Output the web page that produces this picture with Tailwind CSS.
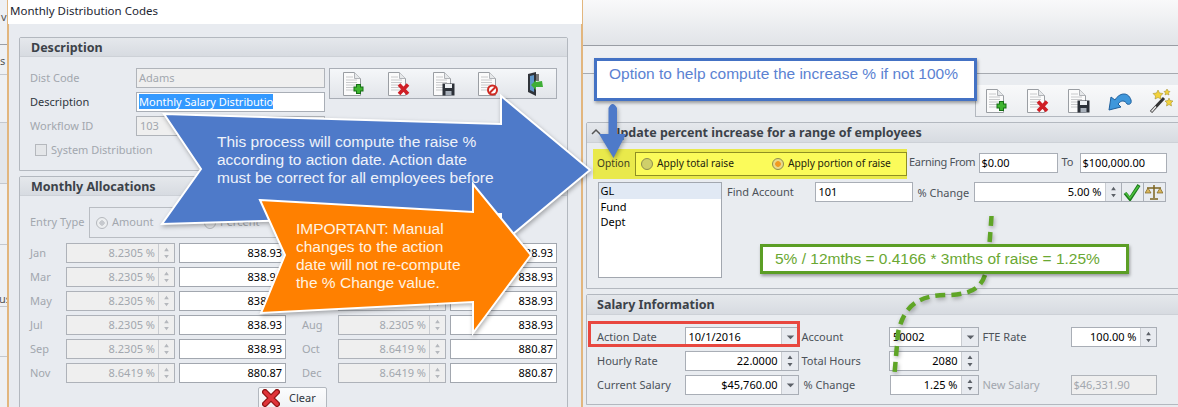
<!DOCTYPE html>
<html lang="en">
<head>
    <meta charset="UTF-8">
    <title>Monthly Distribution Codes</title>
    <script src="https://cdn.jsdelivr.net/npm/@tailwindcss/browser@4"></script>
</head>
<body class="bg-[#e8ebf0]">
<svg class="hidden">
    <symbol id="doc" viewBox="0 0 24 24">
        <path d="M1.500 .5H12.500L18.500 6.500V23.500H1.500Z" fill="#fbfbfb" stroke="#9a9ea3"/>
        <path d="M12.500 .5V6.500H18.500" fill="#e6e8ea" stroke="#b0b3b7"/>
        <path d="M4 5H11M4 8H15M4 10.500H15M4 13H15M4 15.500H15M4 18H15" stroke="#c8c9cb"/>
    </symbol>
    <symbol id="plus" viewBox="0 0 24 24">
        <path d="M16.500 12V22M11.500 17H21.500" stroke="#176f17" stroke-width="5"/>
        <path d="M16.500 13V21M12.500 17H20.500" stroke="#3fb52f" stroke-width="3"/>
    </symbol>
    <symbol id="cross" viewBox="0 0 24 24">
        <path d="M12 12.500L21 22M21 12.500L12 22" stroke="#cf1f26" stroke-width="3.600"/>
    </symbol>
    <symbol id="disk" viewBox="0 0 24 24">
        <path d="M10.500 11.500H22.500V23.500H10.500Z" fill="#2c3138"/>
        <path d="M13 12H20V16H13Z" fill="#eef1f4"/>
        <path d="M13.500 19H19.500V23.500H13.500Z" fill="#a8b0ba"/>
    </symbol>
    <symbol id="spin" viewBox="0 0 16 18">
        <path d="M8 3.500L10.500 7H5.500ZM8 14.500L10.500 11H5.500Z" fill="currentColor"/>
    </symbol>
    <symbol id="drop" viewBox="0 0 18 18">
        <path d="M5 7.500H13L9 11.500Z" fill="#5c6168"/>
    </symbol>
</svg>

<div class="relative w-[1178px] h-[407px] overflow-hidden flex font-['Noto_Sans',sans-serif] text-[11px] text-[#2f3640]">

    <!-- edge of the window behind the dialog -->
    <div class="w-[7px] shrink-0 bg-[#eef0f3] text-[#555] overflow-hidden">
        <div class="h-[45px] border-b border-[#9a9ea5] pt-[9px] pl-[1px]">v</div>
        <div class="h-[30px] border-b border-[#c4c8ce] pt-[8px]">s</div>
        <div class="h-[48px] border-b border-[#c4c8ce]"></div>
        <div class="h-[61px] border-b border-[#c4c8ce] bg-[#e3e6ea]"></div>
        <div class="h-[61px] border-b border-[#c4c8ce]"></div>
        <div class="h-[62px] border-b border-[#c4c8ce] pt-[46px] -ml-[1px] whitespace-nowrap">us</div>
        <div class="h-[50px] border-b border-[#c4c8ce]"></div>
    </div>

    <!-- dialog -->
    <div class="w-[576px] shrink-0 border-x-2 border-[#e2b67e] bg-[#e8ebf0]">
        <div class="h-[24px] bg-white pl-[2px] leading-[21px] text-[11.500px] text-[#1d2530] -ml-[1px] -mr-[1px]">Monthly Distribution Codes</div>

        <div class="pt-[13px] pl-[10px] w-[560px]">
            <section class="h-[134px] w-[549px] border border-[#b3b8bf] rounded-t-[2px]">
                <h2 class="h-[19px] pl-[11px] bg-linear-to-b from-[#e5e8ec] to-[#d7dbe1] border-b border-[#cdd1d7] font-bold text-[12.500px] leading-[20px] text-[#3c4249]">Description</h2>
                <div class="flex pt-[11px] pl-[10px]">
                    <div class="w-[299px] grid grid-cols-[106px_189px] gap-y-[4px] auto-rows-[20px] items-center text-[#a2a7ae]">
                        <div>Dist Code</div>
                        <div class="h-[20px] bg-[#efefef] border border-[#b0b4ba] pl-[2px] leading-[17px]">Adams</div>
                        <div class="text-[#2f3640]">Description</div>
                        <div class="h-[20px] bg-white border border-[#a9aeb6] pl-[2px] leading-[17px]"><span class="bg-[#3399ff] text-white">Monthly Salary Distributio</span></div>
                        <div>Workflow ID</div>
                        <div class="h-[20px] bg-[#efefef] border border-[#b0b4ba] pl-[3px] leading-[17px]">103</div>
                        <div class="col-span-2 flex items-center gap-[4px] pl-[5px]">
                            <span class="w-[12px] h-[12px] border border-[#b5b8bd] bg-[#e4e6e9]"></span>System Distribution
                        </div>
                    </div>
                    <div class="h-[31px] w-[228px] border border-[#a9aeb6] bg-linear-to-b from-[#f5f7f9] to-[#e2e5ea] grid grid-cols-5 justify-items-center items-center pl-[2px]">
                        <svg class="w-[24px] h-[24px]"><use href="#doc"/><use href="#plus"/></svg>
                        <svg class="w-[24px] h-[24px]"><use href="#doc"/><use href="#cross"/></svg>
                        <svg class="w-[24px] h-[24px]"><use href="#doc"/><use href="#disk"/></svg>
                        <svg class="w-[24px] h-[24px]" viewBox="0 0 24 24"><use href="#doc"/><circle cx="15.500" cy="18" r="4.500" fill="#fff" stroke="#cf2a22" stroke-width="2"/><path d="M12.500 21L18.500 15" stroke="#cf2a22" stroke-width="2"/></svg>
                        <svg class="w-[24px] h-[24px]" viewBox="0 0 24 24">
                            <path d="M6 2L14 0V24L6 20Z" fill="#30343a"/>
                            <path d="M8 4L12 3V20L8 18Z" fill="#5f97c9"/>
                            <path d="M14 2H17V9H14Z" fill="#777"/>
                            <path d="M9 13L14 8V10L20 9L21 15H14V18Z" fill="#3fae37"/>
                        </svg>
                    </div>
                </div>
            </section>

            <section class="mt-[5px] w-[549px] h-[300px] border border-[#b3b8bf] rounded-t-[2px]">
                <h2 class="h-[19px] pl-[11px] bg-linear-to-b from-[#e5e8ec] to-[#d7dbe1] border-b border-[#cdd1d7] font-bold text-[12.500px] leading-[20px] text-[#3c4249]">Monthly Allocations</h2>
                <div class="pl-[10px] pt-[11px] text-[#a2a7ae]">
                    <div class="flex items-center h-[31px]">
                        <div class="w-[59px]">Entry Type</div>
                        <div class="w-[420px] h-[31px] border border-[#b9bdc3] flex items-center pl-[6px]">
                            <span class="w-[12px] h-[12px] rounded-full border border-[#b5b8bd] bg-[radial-gradient(circle,#c6c9ce_35%,#eceef0_40%)] mr-[4px]"></span>
                            <span class="w-[92px]">Amount</span>
                            <span class="w-[12px] h-[12px] rounded-full border border-[#b5b8bd] bg-[#e4e6e9] mr-[4px]"></span>Percent
                        </div>
                    </div>

                    <div class="mt-[5px] grid grid-cols-[36px_109px_111px_52px_108px_111px] gap-y-[4px] auto-rows-[20px] items-center">
                        <div>Jan</div>
                        <div class="h-[20px] flex bg-[#efefef] border border-[#aeb2b9]"><span class="flex-1 text-right pr-[3px] leading-[17px]">8.2305 %</span><span class="w-[16px] border-l border-[#c9ccd1] text-[#b5b8bd]"><svg class="w-[15px] h-[18px]"><use href="#spin"/></svg></span></div>
                        <div class="ml-[4px] h-[20px] bg-white border border-[#a2a7af] text-right pr-[3px] leading-[17px] text-black">838.93</div>
                        <div class="pl-[16px]">Feb</div>
                        <div class="h-[20px] flex bg-[#efefef] border border-[#aeb2b9]"><span class="flex-1 text-right pr-[3px] leading-[17px]">8.2305 %</span><span class="w-[16px] border-l border-[#c9ccd1] text-[#b5b8bd]"><svg class="w-[15px] h-[18px]"><use href="#spin"/></svg></span></div>
                        <div class="ml-[4px] h-[20px] bg-white border border-[#a2a7af] text-right pr-[3px] leading-[17px] text-black">838.93</div>

                        <div>Mar</div>
                        <div class="h-[20px] flex bg-[#efefef] border border-[#aeb2b9]"><span class="flex-1 text-right pr-[3px] leading-[17px]">8.2305 %</span><span class="w-[16px] border-l border-[#c9ccd1] text-[#b5b8bd]"><svg class="w-[15px] h-[18px]"><use href="#spin"/></svg></span></div>
                        <div class="ml-[4px] h-[20px] bg-white border border-[#a2a7af] text-right pr-[3px] leading-[17px] text-black">838.93</div>
                        <div class="pl-[16px]">Apr</div>
                        <div class="h-[20px] flex bg-[#efefef] border border-[#aeb2b9]"><span class="flex-1 text-right pr-[3px] leading-[17px]">8.2305 %</span><span class="w-[16px] border-l border-[#c9ccd1] text-[#b5b8bd]"><svg class="w-[15px] h-[18px]"><use href="#spin"/></svg></span></div>
                        <div class="ml-[4px] h-[20px] bg-white border border-[#a2a7af] text-right pr-[3px] leading-[17px] text-black">838.93</div>

                        <div>May</div>
                        <div class="h-[20px] flex bg-[#efefef] border border-[#aeb2b9]"><span class="flex-1 text-right pr-[3px] leading-[17px]">8.2305 %</span><span class="w-[16px] border-l border-[#c9ccd1] text-[#b5b8bd]"><svg class="w-[15px] h-[18px]"><use href="#spin"/></svg></span></div>
                        <div class="ml-[4px] h-[20px] bg-white border border-[#a2a7af] text-right pr-[3px] leading-[17px] text-black">838.93</div>
                        <div class="pl-[16px]">Jun</div>
                        <div class="h-[20px] flex bg-[#efefef] border border-[#aeb2b9]"><span class="flex-1 text-right pr-[3px] leading-[17px]">8.2305 %</span><span class="w-[16px] border-l border-[#c9ccd1] text-[#b5b8bd]"><svg class="w-[15px] h-[18px]"><use href="#spin"/></svg></span></div>
                        <div class="ml-[4px] h-[20px] bg-white border border-[#a2a7af] text-right pr-[3px] leading-[17px] text-black">838.93</div>

                        <div>Jul</div>
                        <div class="h-[20px] flex bg-[#efefef] border border-[#aeb2b9]"><span class="flex-1 text-right pr-[3px] leading-[17px]">8.2305 %</span><span class="w-[16px] border-l border-[#c9ccd1] text-[#b5b8bd]"><svg class="w-[15px] h-[18px]"><use href="#spin"/></svg></span></div>
                        <div class="ml-[4px] h-[20px] bg-white border border-[#a2a7af] text-right pr-[3px] leading-[17px] text-black">838.93</div>
                        <div class="pl-[16px]">Aug</div>
                        <div class="h-[20px] flex bg-[#efefef] border border-[#aeb2b9]"><span class="flex-1 text-right pr-[3px] leading-[17px]">8.2305 %</span><span class="w-[16px] border-l border-[#c9ccd1] text-[#b5b8bd]"><svg class="w-[15px] h-[18px]"><use href="#spin"/></svg></span></div>
                        <div class="ml-[4px] h-[20px] bg-white border border-[#a2a7af] text-right pr-[3px] leading-[17px] text-black">838.93</div>

                        <div>Sep</div>
                        <div class="h-[20px] flex bg-[#efefef] border border-[#aeb2b9]"><span class="flex-1 text-right pr-[3px] leading-[17px]">8.2305 %</span><span class="w-[16px] border-l border-[#c9ccd1] text-[#b5b8bd]"><svg class="w-[15px] h-[18px]"><use href="#spin"/></svg></span></div>
                        <div class="ml-[4px] h-[20px] bg-white border border-[#a2a7af] text-right pr-[3px] leading-[17px] text-black">838.93</div>
                        <div class="pl-[16px]">Oct</div>
                        <div class="h-[20px] flex bg-[#efefef] border border-[#aeb2b9]"><span class="flex-1 text-right pr-[3px] leading-[17px]">8.6419 %</span><span class="w-[16px] border-l border-[#c9ccd1] text-[#b5b8bd]"><svg class="w-[15px] h-[18px]"><use href="#spin"/></svg></span></div>
                        <div class="ml-[4px] h-[20px] bg-white border border-[#a2a7af] text-right pr-[3px] leading-[17px] text-black">880.87</div>

                        <div>Nov</div>
                        <div class="h-[20px] flex bg-[#efefef] border border-[#aeb2b9]"><span class="flex-1 text-right pr-[3px] leading-[17px]">8.6419 %</span><span class="w-[16px] border-l border-[#c9ccd1] text-[#b5b8bd]"><svg class="w-[15px] h-[18px]"><use href="#spin"/></svg></span></div>
                        <div class="ml-[4px] h-[20px] bg-white border border-[#a2a7af] text-right pr-[3px] leading-[17px] text-black">880.87</div>
                        <div class="pl-[16px]">Dec</div>
                        <div class="h-[20px] flex bg-[#efefef] border border-[#aeb2b9]"><span class="flex-1 text-right pr-[3px] leading-[17px]">8.6419 %</span><span class="w-[16px] border-l border-[#c9ccd1] text-[#b5b8bd]"><svg class="w-[15px] h-[18px]"><use href="#spin"/></svg></span></div>
                        <div class="ml-[4px] h-[20px] bg-white border border-[#a2a7af] text-right pr-[3px] leading-[17px] text-black">880.87</div>
                    </div>

                    <button class="ml-[228px] mt-[4px] w-[69px] h-[26px] border border-[#b3b8bf] rounded-[2px] bg-linear-to-b from-[#fbfcfd] to-[#eef0f3] flex items-start pt-[1px] pl-[3px] text-[#2f3640]">
                        <svg class="w-[18px] h-[18px]" viewBox="0 0 18 18">
                            <path d="M3 3L15 15M15 3L3 15" stroke="#8f1414" stroke-width="6" stroke-linecap="round"/>
                            <path d="M3 3L15 15M15 3L3 15" stroke="#e0343a" stroke-width="3.500" stroke-linecap="round"/>
                        </svg>
                        <span class="ml-[9px] leading-[17px]">Clear</span>
                    </button>
                </div>
            </section>
        </div>
    </div>

    <!-- main window -->
    <div class="flex-1 overflow-hidden bg-[#e9ecf0]">
        <div class="h-[46px] bg-linear-to-b from-[#f9f9fa] to-[#e1e4e8] border-b border-[#999da4]"></div>
        <div class="h-[28px] bg-[#eef0f3] border-b border-[#a6aab0]"></div>
        <div class="mt-[11px] ml-[392px] h-[32px] border-l border-b border-[#b3b8bf] flex items-center gap-[17px] pl-[9px] bg-linear-to-b from-[#f8f9fa] to-[#eceef1]">
            <svg class="w-[24px] h-[24px] shrink-0"><use href="#doc"/><use href="#plus"/></svg>
            <svg class="w-[24px] h-[24px] shrink-0"><use href="#doc"/><use href="#cross"/></svg>
            <svg class="w-[24px] h-[24px] shrink-0"><use href="#doc"/><use href="#disk"/></svg>
            <svg class="w-[24px] h-[24px] shrink-0" viewBox="0 0 24 24">
                <path d="M1 21L3 8L7 11C11 4 20 2 23 11C24 15 21 16 19 15C17 11 13 11 10 15L13 18Z" fill="#3f97db" stroke="#1f5f9c"/>
            </svg>
            <svg class="w-[24px] h-[24px] shrink-0" viewBox="0 0 24 24">
                <path d="M2 23L15 9" stroke="#333" stroke-width="3"/>
                <path d="M2.500 22.500L7 17.500" stroke="#eee" stroke-width="1.500"/>
                <path d="M9 1L10.500 4L14 4.500L11.500 7L12 10L9 8.500L6 10L6.500 7L4 4.500L7.500 4ZM20 9L21 11.500L24 12L22 14L22.500 17L20 15.500L17.500 17L18 14L16 12L19 11.500ZM18 0L19 2L21 2.500L19.500 4L20 6L18 5L16 6L16.500 4L15 2.500L17 2Z" fill="#f2d23c" stroke="#9a8420" stroke-width=".5"/>
            </svg>
        </div>

        <section class="mt-[5px] ml-[3px] w-[600px] h-[167px] border border-[#b3b8bf] rounded-tl-[2px]">
            <h2 class="h-[20px] pl-[4px] bg-linear-to-b from-[#e5e8ec] to-[#d7dbe1] border-b border-[#cdd1d7] font-bold text-[12.500px] leading-[19px] text-[#3c4249] flex">
                <svg class="w-[10px] h-[18px] mr-[10px]" viewBox="0 0 10 18"><path d="M1 11L5 7L9 11" fill="none" stroke="#555" stroke-width="1.500"/></svg>
                Update percent increase for a range of employees
            </h2>
            <div class="flex mt-[6px]">
                <div class="ml-[6px] w-[314px] h-[30px] bg-[#e9e94b] flex items-center pl-[4px] text-[#3c3c20] text-[10.200px]">
                    <div class="w-[37.500px]">Option</div>
                    <div class="w-[272.500px] h-[24px] bg-[#fbfb5a] border border-[#8f8f22] flex items-center pl-[5.500px] text-[#23230c]">
                        <span class="w-[12px] h-[12px] rounded-full border border-[#8d8d50] bg-[#cfcf6a] mr-[4px]"></span>
                        <span class="w-[115px]">Apply total raise</span>
                        <span class="w-[12px] h-[12px] rounded-full border border-[#8d8d50] bg-[radial-gradient(circle,#f19a20_35%,#e9d98a_45%)] mr-[4px]"></span>Apply portion of raise
                    </div>
                </div>
                <div class="flex items-start pt-[4px] pl-[2px]">
                    <div class="w-[69.500px] whitespace-nowrap tracking-[-0.3px] leading-[18px] text-[#4c5259]">Earning From</div>
                    <div class="w-[79px] h-[20px] bg-white border border-[#a9aeb6] pl-[2px] leading-[17px] text-black">$0.00</div>
                    <div class="w-[22px] pl-[4px] leading-[18px] text-[#4c5259]">To</div>
                    <div class="w-[87px] h-[20px] bg-white border border-[#a9aeb6] pl-[2px] leading-[17px] text-black">$100,000.00</div>
                </div>
            </div>
            <div class="flex mt-[3px]">
                <ul class="ml-[10.500px] w-[124.500px] h-[96px] bg-white border border-[#a2a7af] text-black leading-[15px]">
                    <li class="h-[16px] bg-[#e1e9f4] pl-[2px]">GL</li>
                    <li class="h-[15px] pl-[2px]">Fund</li>
                    <li class="h-[15px] pl-[2px]">Dept</li>
                </ul>
                <div class="ml-[5px] w-[87.500px] leading-[20px] text-[#4c5259]">Find Account</div>
                <div class="w-[98px] h-[20px] bg-white border border-[#a9aeb6] pl-[3px] leading-[17px] text-black">101</div>
                <div class="ml-[5px] w-[56px] leading-[21px] text-[#4c5259]">% Change</div>
                <div class="w-[148px] h-[20px] flex bg-white border border-[#a9aeb6] text-black">
                    <span class="flex-1 text-right pr-[3px] leading-[17px]">5.00 %</span>
                    <span class="w-[16px] border-l border-[#c9ccd1] bg-[#e8ebf0] text-[#5c6168]"><svg class="w-[15px] h-[18px]"><use href="#spin"/></svg></span>
                </div>
                <div class="w-[22px] h-[20px] border-y border-r border-[#a9aeb6] flex items-center justify-center">
                    <svg class="w-[18px] h-[18px]" viewBox="0 0 18 18"><path d="M2 10L7 16L16 2" fill="none" stroke="#1d7a1d" stroke-width="3.500"/><path d="M2.500 10L7 15L15.500 3" fill="none" stroke="#4cc13c" stroke-width="1.500"/></svg>
                </div>
                <div class="w-[22px] h-[20px] border-y border-r border-[#a9aeb6] flex items-center justify-center">
                    <svg class="w-[18px] h-[18px]" viewBox="0 0 18 18"><path d="M9 2V15M5 16H13M2 5H16" stroke="#7c6420" stroke-width="1.500"/><path d="M0 10H6L3 5ZM12 10H18L15 5Z" fill="#d8b45a" stroke="#7c6420" stroke-width=".7"/></svg>
                </div>
            </div>
        </section>

        <section class="mt-[5px] ml-[3px] w-[600px] h-[111px] border border-[#b3b8bf] rounded-tl-[2px]">
            <h2 class="h-[20px] pl-[10px] bg-linear-to-b from-[#e5e8ec] to-[#d7dbe1] border-b border-[#cdd1d7] font-bold text-[12.500px] leading-[19px] text-[#3c4249]">Salary Information</h2>
            <div class="mt-[12px] ml-[10px] grid grid-cols-[87.500px_114px_90.500px_89.500px_92px_86px] gap-y-[4px] auto-rows-[20px] items-center text-[#4c5259]">
                <div>Action Date</div>
                <div class="h-[20px] flex bg-white border border-[#a9aeb6] text-black"><span class="flex-1 pl-[3px] leading-[17px]">10/1/2016</span><span class="w-[17px] border-l border-[#c9ccd1] bg-[#e8ebf0]"><svg class="w-[17px] h-[18px]"><use href="#drop"/></svg></span></div>
                <div class="pl-[3px]">Account</div>
                <div class="h-[20px] flex bg-white border border-[#a9aeb6] text-black"><span class="flex-1 pl-[3px] leading-[17px]">50002</span><span class="w-[17px] border-l border-[#c9ccd1] bg-[#e8ebf0]"><svg class="w-[17px] h-[18px]"><use href="#drop"/></svg></span></div>
                <div class="pl-[4px]">FTE Rate</div>
                <div class="h-[20px] flex bg-white border border-[#a9aeb6] text-black"><span class="flex-1 text-right pr-[3px] leading-[17px]">100.00 %</span><span class="w-[16px] border-l border-[#c9ccd1] bg-[#e8ebf0] text-[#5c6168]"><svg class="w-[15px] h-[18px]"><use href="#spin"/></svg></span></div>

                <div>Hourly Rate</div>
                <div class="h-[20px] flex bg-white border border-[#a9aeb6] text-black"><span class="flex-1 text-right pr-[3px] leading-[17px]">22.0000</span><span class="w-[17px] border-l border-[#c9ccd1] bg-[#e8ebf0] text-[#5c6168]"><svg class="w-[16px] h-[18px]"><use href="#spin"/></svg></span></div>
                <div class="pl-[3px]">Total Hours</div>
                <div class="h-[20px] flex bg-white border border-[#a9aeb6] text-black"><span class="flex-1 text-right pr-[3px] leading-[17px]">2080</span><span class="w-[17px] border-l border-[#c9ccd1] bg-[#e8ebf0] text-[#5c6168]"><svg class="w-[16px] h-[18px]"><use href="#spin"/></svg></span></div>
                <div class="col-span-2"></div>

                <div>Current Salary</div>
                <div class="h-[20px] flex bg-white border border-[#a9aeb6] text-black"><span class="flex-1 text-right pr-[3px] leading-[17px]">$45,760.00</span><span class="w-[17px] border-l border-[#c9ccd1] bg-[#e8ebf0]"><svg class="w-[17px] h-[18px]"><use href="#drop"/></svg></span></div>
                <div class="pl-[5px]">% Change</div>
                <div class="ml-[1px] h-[20px] flex bg-white border border-[#a9aeb6] text-black"><span class="flex-1 text-right pr-[3px] leading-[17px]">1.25 %</span><span class="w-[17px] border-l border-[#c9ccd1] bg-[#e8ebf0] text-[#5c6168]"><svg class="w-[16px] h-[18px]"><use href="#spin"/></svg></span></div>
                <div class="pl-[4px] text-[#a2a7ae]">New Salary</div>
                <div class="h-[20px] bg-[#efefef] border border-[#b0b4ba] pl-[2px] leading-[17px] text-[#a2a7ae]">$46,331.90</div>
            </div>
        </section>
    </div>

    <!-- annotations on top of the screenshot -->
    <div class="absolute left-[588px] top-[321px] w-[212px] h-[26px] border-[3px] border-[#e8473f]"></div>

    <svg class="absolute inset-0 w-[1178px] h-[407px] drop-shadow-[1px_2px_2px_rgba(0,0,0,0.3)]" viewBox="0 0 1178 407">
        <path d="M991.500 216C991 225 990 236 989.500 244M985 275C980 290 968 294 950 295C925 295 905 300 898 333L894.500 374" fill="none" stroke="#5fa526" stroke-width="4.500" stroke-dasharray="10 6"/>
        <path d="M164 114L501 124V96L590 170L501 244V214L162 224L201 169Z" fill="#4e7ac9" stroke="#fff" stroke-width="2"/>
        <path d="M260 200L473 212V184L531 255L473 333V302L261 313L285 255Z" fill="#ff8000" stroke="#fff" stroke-width="2"/>
        <path d="M608.500 108Q612.500 100 617 108V134H626L613.500 158L599 134H608.500Z" fill="#4e7ac9"/>
    </svg>

    <div class="absolute left-[594px] top-[58px] w-[383px] h-[43px] bg-white border-[3px] border-[#4472c4] shadow-[1px_2px_3px_rgba(0,0,0,0.35)] pl-[12px] font-['Liberation_Sans',sans-serif] text-[15.500px] leading-[26px] text-[#5b82d2]">Option to help compute the increase % if not 100%</div>

    <div class="absolute left-[760px] top-[244px] w-[369px] h-[30px] bg-white border-[3px] border-[#5b9e25] shadow-[1px_2px_3px_rgba(0,0,0,0.35)] pl-[12px] font-['Liberation_Sans',sans-serif] text-[15.500px] leading-[24px] text-[#6aa833]">5% / 12mths = 0.4166 * 3mths of raise = 1.25%</div>

    <div class="absolute left-[217px] top-[133px] w-[282px] font-['Liberation_Sans',sans-serif] text-[15.500px] leading-[18px] text-[#eef2fa]">This process will compute the raise % according to action date. Action date must be correct for all employees before</div>

    <div class="absolute left-[296px] top-[220px] w-[175px] font-['Liberation_Sans',sans-serif] text-[15.500px] leading-[18px] text-[#fff3e2]">IMPORTANT: Manual changes to the action date will not re-compute the % Change value.</div>
</div>
</body>
</html>
